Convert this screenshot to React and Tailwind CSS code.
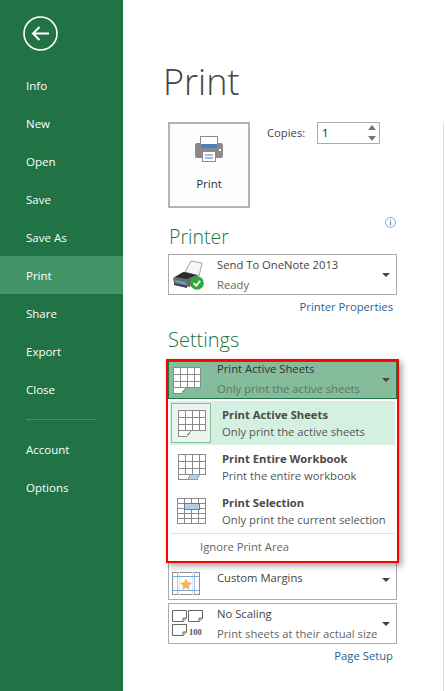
const NAV1 = ["Info", "New", "Open", "Save", "Save As", "Print", "Share", "Export", "Close"];
const NAV2 = ["Account", "Options"];

function NavItem({ label }) {
  const active = label === "Print";
  return (
    <div className={`h-[38px] flex items-center pl-[26px] pt-[1px] text-[11.5px] text-white ${active ? "bg-[#439467]" : ""}`}>
      {label}
    </div>
  );
}

function Caret() {
  return (
    <svg width="8" height="4" viewBox="0 0 8 4" className="shrink-0">
      <path d="M0 0h8L4 4z" fill="#444" />
    </svg>
  );
}

function SheetIcon({ corner = "plain" }) {
  const g = "#8a8a8a";
  return (
    <svg width="30" height="27" viewBox="0 0 30 27" fill="none" stroke={g} strokeWidth="1" shapeRendering="crispEdges">
      {corner === "none" ? (
        <>
          <rect x="1.5" y="0.5" width="28" height="25" fill="#fff" />
          <path d="M1.5 5.500h28M1.5 10.500h28M1.500 15.500h28M1.500 20.500h28M8.500 .5v25M15.500 .5v25M22.500 .5v25" />
          <rect x="8" y="5" width="15" height="6" fill="#b7cde6" stroke="#4a7fb5" />
        </>
      ) : (
        <>
          <path d="M2.500 .5h27v20h-27z" fill="#fff" />
          <path d="M2.500 7.500h27M2.500 14.500h27M9.500 .5v20M16.500 .5v20M23.500 .5v20" />
          {corner === "plain" ? (
            <path d="M2.500 20.500v6h8l5-6" fill="#fff" />
          ) : (
            <>
              <path d="M2.500 20.500v5h8" />
              <path d="M12 25.500l2-5h10l-3 5z" fill="#b7cde6" stroke="#8aa0b8" />
            </>
          )}
        </>
      )}
    </svg>
  );
}

function MarginIcon() {
  return (
    <svg width="28" height="23" viewBox="0 0 28 23" fill="none">
      <rect x="0.5" y="0.5" width="27" height="22" fill="#fff" stroke="#8f8f8f" />
      <path d="M5.500 0v23M22.500 0v23" stroke="#9dc0e4" />
      <path d="M7.500 0v23M20.500 0v23" stroke="#dbe7f3" />
      <path d="M0 4.500h28M0 18.500h28" stroke="#7ba6d6" />
      <path d="M14 6.500l1.900 3.800 4.100.5-3 2.900.8 4-3.800-2-3.800 2 .8-4-3-2.900 4.100-.5z" fill="#f2b661" />
    </svg>
  );
}

function ScaleIcon() {
  const Page = ({ x, y }) => (
    <path transform={`translate(${x} ${y})`} d="M.5 .5h14v7.500l-3.500 3.500h-10.500zM14.500 8h-3.500v3.500" fill="#fff" stroke="#666" />
  );
  return (
    <svg width="33" height="27" viewBox="0 0 33 27">
      <Page x={0} y={0} />
      <Page x={16} y={0} />
      <Page x={0} y={14} />
      <text x="17" y="25" fontSize="8.500" fontWeight="700" fill="#555" fontFamily="Liberation Serif, serif">100</text>
    </svg>
  );
}

function PrinterBig() {
  return (
    <svg width="28" height="26" viewBox="0 0 28 26">
      <rect x="0" y="7" width="28" height="15" rx="2" fill="#8a8a8a" />
      <rect x="5.500" y=".5" width="17" height="11" fill="#fff" stroke="#8a8a8a" />
      <rect x="6" y="8" width="16" height="4" fill="#4b7fb8" />
      <rect x="7.500" y="15.500" width="13" height="10" fill="#fff" stroke="#8a8a8a" />
      <path d="M10 19h8M10 22h8" stroke="#4b7fb8" />
      <rect x="24" y="13" width="2" height="2" fill="#fff" />
    </svg>
  );
}

function PrinterColor() {
  return (
    <svg width="33" height="30" viewBox="0 0 33 30">
      <path d="M13 12L19 1l11 2-3 13z" fill="#f6f6f6" stroke="#a5a5a5" />
      <path d="M1 18l10-6 15 3v7l-9 5-15-4z" fill="#6b6b6b" />
      <path d="M3 17l9-5 12 3-9 4z" fill="#2a2a2a" />
      <path d="M3 20l10 2 2 3-11-3z" fill="#58a6dc" />
      <path d="M2 23l13 3v2l-13-3z" fill="#3a3a3a" />
      <circle cx="25" cy="23" r="6.800" fill="#2fa83c" />
      <path d="M21.500 23l2.700 2.700 4-5" fill="none" stroke="#fff" strokeWidth="1.700" />
    </svg>
  );
}

function Select({ icon, title, sub, h = "h-[41px]", className = "" }) {
  return (
    <div className={`${h} flex items-stretch border border-[#ababab] bg-white ${className}`}>
      <div className="w-[48px] flex items-center pl-[3px] shrink-0">{icon}</div>
      <div className="flex-1 flex flex-col text-[11.25px] leading-[20px] text-[#444] whitespace-nowrap">
        <div>{title}</div>
        {sub && <div className="text-[#666]">{sub}</div>}
      </div>
      <div className="w-[14px] flex items-center shrink-0"><Caret /></div>
    </div>
  );
}

function MenuRow({ icon, title, sub, active }) {
  return (
    <div className={`h-[44px] flex items-center text-[11.25px] leading-[17px] text-[#555] ${active ? "bg-[#d3f0e0]" : ""}`}>
      <div className={`w-[40px] h-[40px] ml-[1px] flex items-center justify-center border ${active ? "border-[#86bf9f] bg-[#e9f5ee]" : "border-transparent"}`}>
        {icon}
      </div>
      <div className="ml-[11px] whitespace-nowrap">
        <div className="font-bold text-[#4a4a4a]">{title}</div>
        <div>{sub}</div>
      </div>
    </div>
  );
}

export default function App() {
  return (
    <div className="w-[445px] h-[691px] flex bg-white overflow-hidden" style={{ fontFamily: '"Open Sans", "Noto Sans", sans-serif' }}>
      <aside className="w-[123px] shrink-0 bg-[#217346] flex flex-col">
        <div className="h-[66px] pl-[23px] pt-[16px]">
          <svg width="35" height="35" viewBox="0 0 35 35" fill="none" stroke="#fff">
            <circle cx="17.500" cy="17.500" r="16.500" strokeWidth="1.600" />
            <path d="M26 17.500H10M16.500 11l-6.500 6.500 6.500 6.500" strokeWidth="2" />
          </svg>
        </div>
        {NAV1.map((l) => <NavItem key={l} label={l} />)}
        <div className="h-[1px] w-[71px] ml-[26px] mt-[11px] mb-[10px] bg-[#4a9169]" />
        {NAV2.map((l) => <NavItem key={l} label={l} />)}
      </aside>

      <main className="flex-1 flex border-r border-transparent">
        <div className="w-[229px] ml-[45px] flex flex-col">
          <h1 className="h-[55px] mt-[61px] mb-[1px] -ml-[5px] text-[36px] leading-[42px] font-light text-[#444]">Print</h1>
          <div className="h-[86px] mt-[5px] flex items-start">
            <div className="w-[82px] h-[86px] border-2 border-[#b4b4b4] bg-[#fdfdfd] flex flex-col items-center pt-[12px] text-[11.5px] text-[#333]">
              <PrinterBig />
              <div className="mt-[13px]">Print</div>
            </div>
            <div className="ml-[17px] w-[40px] text-[11.25px] leading-[22px] text-[#444]">Copies:</div>
            <div className="ml-[10px] w-[63px] h-[22px] border border-[#ababab] flex items-center justify-between pl-[4px] pr-[3px]">
              <span className="text-[11.5px] text-[#222] font-medium">1</span>
              <svg width="8" height="16" viewBox="0 0 8 16"><path d="M0 5l4-5 4 5zM0 11h8l-4 5z" fill="#777" /></svg>
            </div>
          </div>
          <div className="h-[46px] flex items-end relative">
            <h2 className="text-[19.5px] leading-[32px] mb-[1px] ml-[1px] font-light text-[#217346]">Printer</h2>
            <svg width="11" height="11" viewBox="0 0 11 11" fill="none" className="absolute right-0 top-[9px] -translate-x-[1px]">
              <circle cx="5.500" cy="5.500" r="5" stroke="#7aa7d8" />
              <path d="M5.500 2.500v1M5.500 4.500v4" stroke="#4b7fb8" />
            </svg>
          </div>
          <Select icon={<PrinterColor />} title="Send To OneNote 2013" sub="Ready" />
          <div className="h-[24px] pr-[4px] flex items-center justify-end text-[11.25px] text-[#2b5f92]">Printer Properties</div>
          <h2 className="h-[35px] mt-[5px] text-[20px] leading-[32px] font-light text-[#217346]">Settings</h2>

          <div className="relative z-10 -mx-[2px] border-2 border-[#ff0000] bg-white shadow-[3px_3px_6px_rgba(0,0,0,0.35)]">
            <div className="h-[38px] flex items-stretch border border-[#217346] bg-[#85bc9c]">
              <div className="w-[48px] flex items-center pl-[2px] shrink-0"><SheetIcon /></div>
              <div className="flex-1 flex flex-col -mt-[3px] text-[11.25px] leading-[20px] text-[#333] whitespace-nowrap">
                <div>Print Active Sheets</div>
                <div className="text-[#5d7567]">Only print the active sheets</div>
              </div>
              <div className="w-[14px] flex items-center shrink-0"><Caret /></div>
            </div>
            <div className="px-[2px] pt-[2px]">
              <MenuRow active icon={<SheetIcon />} title="Print Active Sheets" sub="Only print the active sheets" />
              <MenuRow icon={<SheetIcon corner="blue" />} title="Print Entire Workbook" sub="Print the entire workbook" />
              <MenuRow icon={<SheetIcon corner="none" />} title="Print Selection" sub="Only print the current selection" />
              <div className="h-[1px] bg-[#e1e1e1]" />
              <div className="h-[27px] pl-[30px] flex items-center text-[11.25px] text-[#666]">Ignore Print Area</div>
            </div>
          </div>

          <Select h="h-[40px]" className="-mt-[3px]" icon={<div className="pt-[6px]"><MarginIcon /></div>} title={<div className="pt-[7px]">Custom Margins</div>} />
          <Select h="h-[41px]" className="mt-[3px]" icon={<ScaleIcon />} title="No Scaling" sub="Print sheets at their actual size" />
          <div className="h-[24px] pr-[4px] flex items-center justify-end text-[11.25px] text-[#2b5f92]">Page Setup</div>
        </div>
        <div className="ml-auto mt-[122px] w-[1px] bg-[#e1e1e1]" />
      </main>
    </div>
  );
}
